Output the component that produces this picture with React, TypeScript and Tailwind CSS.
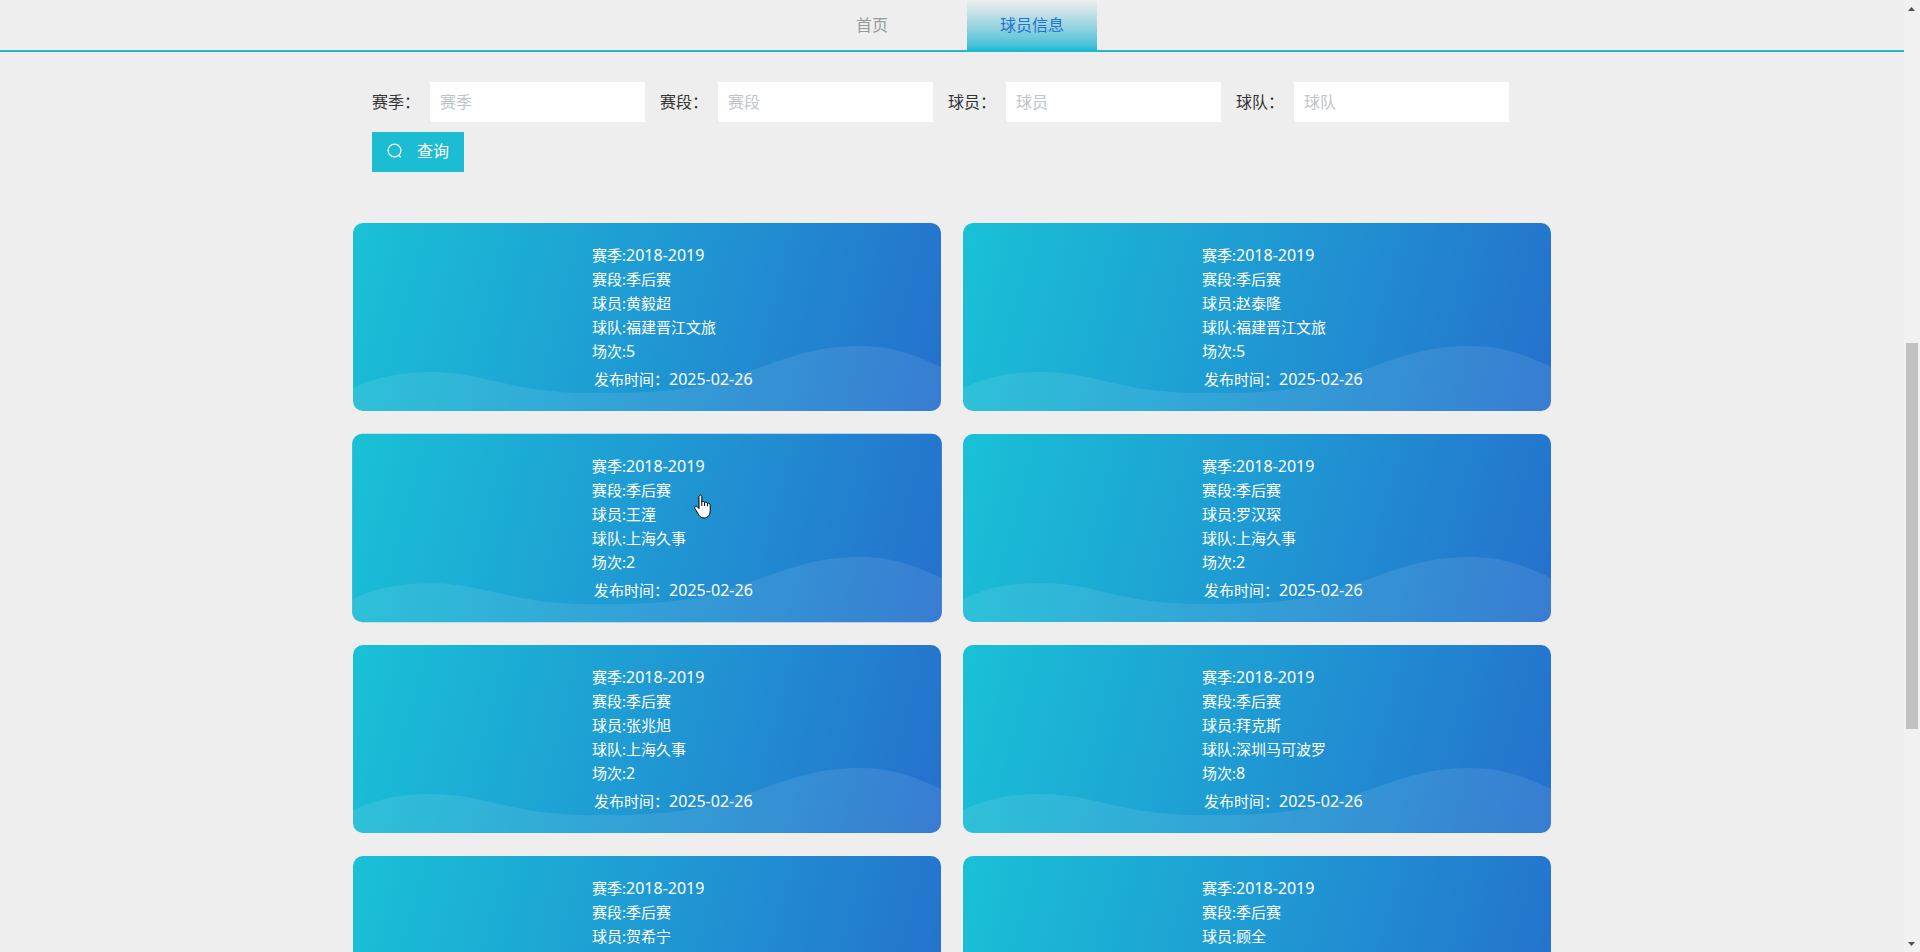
import React from 'react';
import { clsx } from 'clsx';

interface Player {
  season: string;
  stage: string;
  name: string;
  team: string;
  games: number;
  date: string;
}

const players: Player[] = [
  { season: '2018-2019', stage: '季后赛', name: '黄毅超', team: '福建晋江文旅', games: 5, date: '2025-02-26' },
  { season: '2018-2019', stage: '季后赛', name: '赵泰隆', team: '福建晋江文旅', games: 5, date: '2025-02-26' },
  { season: '2018-2019', stage: '季后赛', name: '王潼', team: '上海久事', games: 2, date: '2025-02-26' },
  { season: '2018-2019', stage: '季后赛', name: '罗汉琛', team: '上海久事', games: 2, date: '2025-02-26' },
  { season: '2018-2019', stage: '季后赛', name: '张兆旭', team: '上海久事', games: 2, date: '2025-02-26' },
  { season: '2018-2019', stage: '季后赛', name: '拜克斯', team: '深圳马可波罗', games: 8, date: '2025-02-26' },
  { season: '2018-2019', stage: '季后赛', name: '贺希宁', team: '深圳马可波罗', games: 8, date: '2025-02-26' },
  { season: '2018-2019', stage: '季后赛', name: '顾全', team: '深圳马可波罗', games: 8, date: '2025-02-26' },
];

const filters = [
  { id: 'season', label: '赛季' },
  { id: 'stage', label: '赛段' },
  { id: 'player', label: '球员' },
  { id: 'team', label: '球队' },
];

function NavBar() {
  return (
    <nav className="flex justify-center gap-[30px] border-b-2 border-[#23b7cd] text-base leading-[50px]">
      <a href="#home" className="w-[130px] text-center text-[#999]">首页</a>
      <a
        href="#players"
        className="w-[130px] bg-linear-to-b from-[#eee] to-[#1cbcd3] text-center text-[#2374d0]"
      >
        球员信息
      </a>
    </nav>
  );
}

function SearchForm() {
  return (
    <form className="flex flex-wrap gap-x-[15px] gap-y-[10px] px-[19px]" onSubmit={(e) => e.preventDefault()}>
      {filters.map((f) => (
        <div key={f.id} className="flex items-center">
          <label htmlFor={f.id} className="w-[58px] text-base text-[#333]">{f.label}：</label>
          <input
            id={f.id}
            type="text"
            placeholder={f.label}
            className="h-10 w-[215px] bg-white px-[10px] text-base text-[#606266] outline-none placeholder:text-[#c0c4cc]"
          />
        </div>
      ))}
      <button type="submit" className="flex h-10 items-center gap-[14px] bg-[#1cbcd3] px-[15px] pb-0.5 text-base text-white">
        <svg width="16" height="16" viewBox="0 0 16 16" fill="none" stroke="currentColor" strokeWidth="1.2">
          <circle cx="7.5" cy="7.5" r="6.4" />
          <path d="M11.2 11.8 L13.8 14.4" />
        </svg>
        查询
      </button>
    </form>
  );
}

function Waves() {
  return (
    <svg
      className="absolute inset-0 h-full w-full"
      viewBox="0 0 588 188"
      preserveAspectRatio="none"
      fill="white"
      aria-hidden="true"
    >
      <path
        fillOpacity="0.09"
        d="M0 165 C25 153 50 149 80 149 C130 149 160 170 235 170 C275 170 305 170 340 164 C410 150 440 123 507 123 C540 123 562 132 588 144 V188 H0 Z"
      />
    </svg>
  );
}

function PlayerCard({ player, active }: { player: Player; active: boolean }) {
  return (
    <li
      className={clsx(
        'relative cursor-pointer overflow-hidden rounded-[10px] bg-linear-[105deg] from-[#19c1d6] via-[#1f99d3] to-[#2570cd] py-5 pl-[239px] text-[15px] leading-6 text-white',
        active && 'scale-[1.003]'
      )}
    >
      <Waves />
      <div className="relative">
        <p>赛季:<span className="text-base leading-6">{player.season}</span></p>
        <p>赛段:{player.stage}</p>
        <p>球员:{player.name}</p>
        <p>球队:{player.team}</p>
        <p>场次:<span className="text-base leading-6">{player.games}</span></p>
        <p className="mt-1 pl-0.5">发布时间：<time className="text-base leading-6">{player.date}</time></p>
      </div>
    </li>
  );
}

function ScrollBar() {
  return (
    <div className="flex w-4 shrink-0 flex-col items-center bg-[#f1f1f1]" aria-hidden="true">
      <svg width="16" height="17" viewBox="0 0 16 17" fill="#505050">
        <path d="M4 11 H11 L7.5 7 Z" />
      </svg>
      <div className="grow-[326]" />
      <div className="w-3 grow-[386] bg-[#c1c1c1]" />
      <div className="grow-[206]" />
      <svg width="16" height="17" viewBox="0 0 16 17" fill="#505050">
        <path d="M4 7 H11 L7.5 11 Z" />
      </svg>
    </div>
  );
}

function HandCursor() {
  return (
    <svg className="pointer-events-none absolute top-[494px] left-[693px]" width="20" height="26" viewBox="0 0 20 26" aria-hidden="true">
      <path
        d="M6 2.5 C6 0.6 8.8 0.6 8.8 2.5 V8 C9.4 7 11.4 7.2 11.6 8.6 C12.4 7.8 14.2 8 14.4 9.4 C15.4 8.8 17.2 9.2 17.2 11 V16.5 C17.2 20.5 15.2 24 11.2 24 C7.6 24 6 21.8 4.8 19.4 L1.8 14.2 C1 12.6 3 11.4 4.2 12.6 L6 14.6 Z"
        fill="white"
        stroke="black"
        strokeWidth="1"
        strokeLinejoin="round"
      />
      <path d="M8.8 8 V12 M11.6 8.6 V12 M14.4 9.4 V12.4" stroke="black" strokeWidth="1" fill="none" />
    </svg>
  );
}

export default function App() {
  return (
    <div className="relative flex h-screen overflow-hidden bg-[#eee] font-['Noto_Sans','Noto_Sans_CJK_SC',sans-serif]">
      <div className="min-w-0 flex-1 overflow-hidden">
        <NavBar />
        <main className="mx-auto max-w-[1198px] pt-[30px]">
          <SearchForm />
          <ul className="mt-[51px] grid grid-cols-2 gap-x-[22px] gap-y-[23px]">
            {players.map((player) => (
              <PlayerCard key={player.name} player={player} active={player.name === '王潼'} />
            ))}
          </ul>
        </main>
      </div>
      <ScrollBar />
      <HandCursor />
    </div>
  );
}
